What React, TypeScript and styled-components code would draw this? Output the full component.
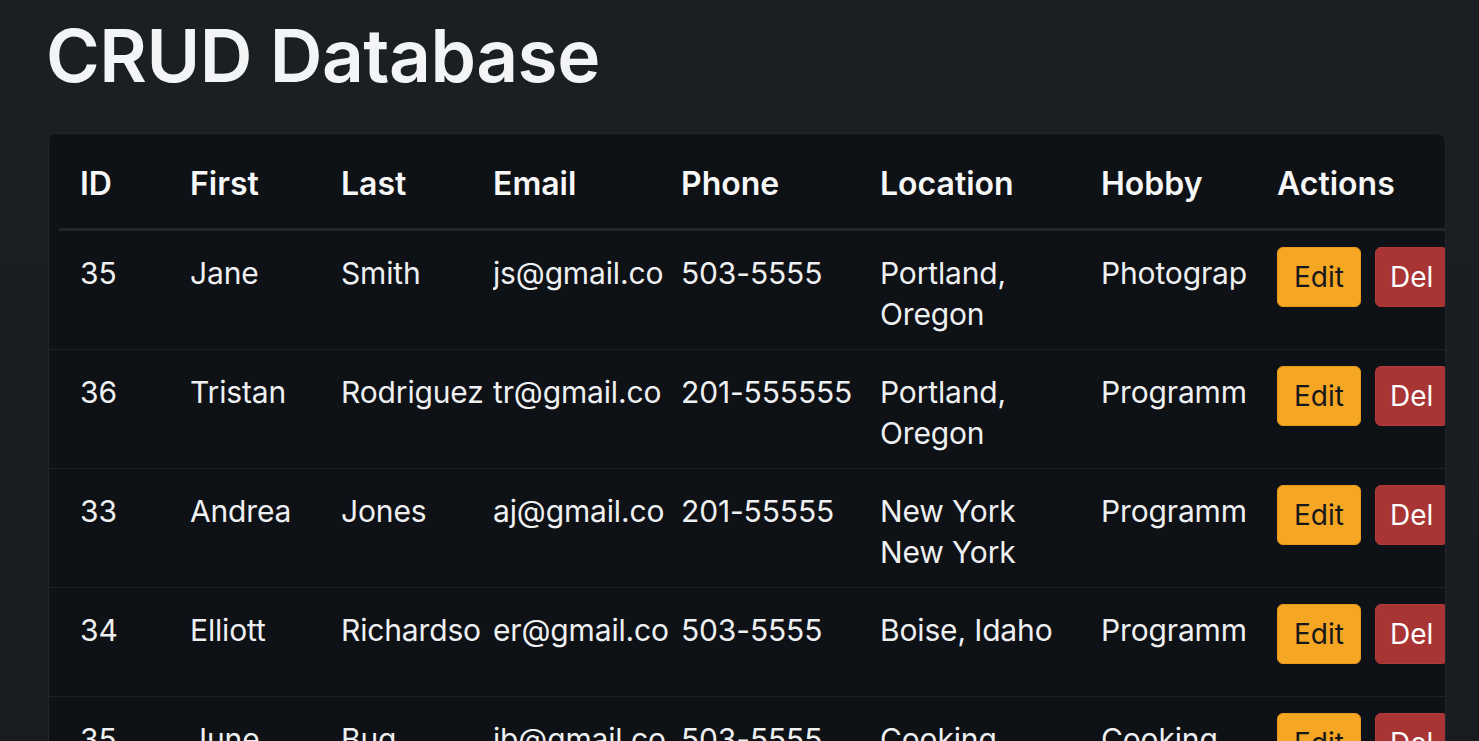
import React from "react";
import styled, { createGlobalStyle } from "styled-components";

type Person = {
  id: number;
  first: string;
  last: string;
  email: string;
  phone: string;
  location: string;
  hobby: string;
};

type Column = {
  key: keyof Person | "actions";
  label: string;
  clip: number;
  wrap?: boolean;
};

// values as they show in the narrow columns
const people: Person[] = [
  { id: 35, first: "Jane", last: "Smith", email: "js@gmail.co", phone: "503-5555", location: "Portland, Oregon", hobby: "Photograp" },
  { id: 36, first: "Tristan", last: "Rodriguez", email: "tr@gmail.co", phone: "201-555555", location: "Portland, Oregon", hobby: "Programm" },
  { id: 33, first: "Andrea", last: "Jones", email: "aj@gmail.co", phone: "201-55555", location: "New York New York", hobby: "Programm" },
  { id: 34, first: "Elliott", last: "Richardso", email: "er@gmail.co", phone: "503-5555", location: "Boise, Idaho", hobby: "Programm" },
  { id: 35, first: "June", last: "Bug", email: "jb@gmail.co", phone: "503-5555", location: "Cooking", hobby: "Cooking" },
];

const columns: Column[] = [
  { key: "id", label: "ID", clip: 104 },
  { key: "first", label: "First", clip: 148 },
  { key: "last", label: "Last", clip: 150 },
  { key: "email", label: "Email", clip: 184 },
  { key: "phone", label: "Phone", clip: 195 },
  { key: "location", label: "Location", clip: 200, wrap: true },
  { key: "hobby", label: "Hobby", clip: 170 },
  { key: "actions", label: "Actions", clip: 200 },
];

const GlobalStyle = createGlobalStyle`
  html, body {
    margin: 0;
    padding: 0;
    overflow: hidden;
    background: #1a1d21;
  }
  body {
    font-family: Inter, Roboto, "Liberation Sans", sans-serif;
    color: #f1f2f3;
  }
`;

const Page = styled.div`
  min-height: 100vh;
  padding: 10px 0 0 48px;
  background: linear-gradient(180deg, #1b1e22 0%, #181b1f 100%);
`;

const Title = styled.h1`
  margin: 0 0 32px -2px;
  font-size: 73px;
  font-weight: 600;
  line-height: 91px;
  letter-spacing: -0.5px;
  color: #f3f4f6;
`;

const Card = styled.div`
  width: 1398px;
  box-sizing: border-box;
  background: #0e1115;
  border: 1px solid #22262b;
  border-radius: 8px;
  overflow: hidden;
`;

const gridTracks = "110px 151px 152px 188px 199px 221px 176px 1fr";

const HeadRow = styled.div`
  display: grid;
  grid-template-columns: ${gridTracks};
  margin-left: 10px;
  padding: 29px 0 24px 21px;
  border-bottom: 3px solid #23272c;
`;

const HeadCell = styled.div`
  font-size: 32px;
  font-weight: 600;
  line-height: 41px;
  color: #f7f7f8;
  white-space: nowrap;
`;

const Row = styled.div`
  display: grid;
  grid-template-columns: ${gridTracks};
  align-items: start;
  min-height: 109px;
  box-sizing: border-box;
  padding: 0 0 14px 31px;
  border-bottom: 1px solid #1d2126;
`;

const Cell = styled.div<{ $clip: number; $wrap?: boolean }>`
  max-width: ${(p) => p.$clip}px;
  overflow: hidden;
  padding-top: 22px;
  font-size: 30px;
  font-weight: 400;
  line-height: 41px;
  letter-spacing: -0.15px;
  color: #eef0f2;
  white-space: ${(p) => (p.$wrap ? "normal" : "nowrap")};
`;

const Actions = styled.div`
  display: flex;
  gap: 14px;
  padding-top: 16px;
`;

const Button = styled.button<{ $tone: "edit" | "del" }>`
  height: 60px;
  padding: 0 ${(p) => (p.$tone === "edit" ? 16 : 14)}px;
  border-radius: 6px;
  border: 1px solid ${(p) => (p.$tone === "edit" ? "#e99a1c" : "#b33a3a")};
  background: ${(p) => (p.$tone === "edit" ? "#f5a623" : "#a83434")};
  color: ${(p) => (p.$tone === "edit" ? "#15171a" : "#ffffff")};
  font-family: Inter, Roboto, "Liberation Sans", sans-serif;
  font-size: 28px;
  line-height: 1;
  cursor: pointer;
`;

export default function App() {
  return (
    <>
      <GlobalStyle />
      <Page>
        <Title>CRUD Database</Title>
        <Card>
          <HeadRow>
            {columns.map((c) => (
              <HeadCell key={c.key}>{c.label}</HeadCell>
            ))}
          </HeadRow>
          {people.map((person, i) => (
            <Row key={i}>
              {columns.map((c) =>
                c.key === "actions" ? (
                  <Actions key={c.key}>
                    <Button $tone="edit">Edit</Button>
                    <Button $tone="del">Del</Button>
                  </Actions>
                ) : (
                  <Cell key={c.key} $clip={c.clip} $wrap={c.wrap}>
                    {person[c.key]}
                  </Cell>
                )
              )}
            </Row>
          ))}
        </Card>
      </Page>
    </>
  );
}
